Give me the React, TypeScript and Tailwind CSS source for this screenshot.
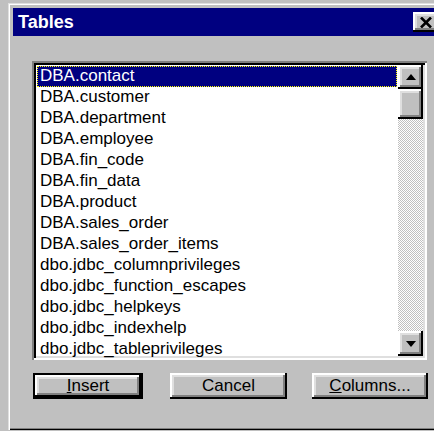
import React from "react";

const tables = [
  "DBA.contact",
  "DBA.customer",
  "DBA.department",
  "DBA.employee",
  "DBA.fin_code",
  "DBA.fin_data",
  "DBA.product",
  "DBA.sales_order",
  "DBA.sales_order_items",
  "dbo.jdbc_columnprivileges",
  "dbo.jdbc_function_escapes",
  "dbo.jdbc_helpkeys",
  "dbo.jdbc_indexhelp",
  "dbo.jdbc_tableprivileges",
];

const raised =
  "shadow-[inset_-2px_-2px_0_#000000,inset_2px_2px_0_#ffffff,inset_-4px_-4px_0_#808080,inset_4px_4px_0_#dfdfdf]";

function Arrow({ up }: { up?: boolean }) {
  return (
    <svg width="10" height="6" viewBox="0 0 10 6">
      <polygon points={up ? "5,0 10,6 0,6" : "0,0 10,0 5,6"} fill="#000" />
    </svg>
  );
}

function ScrollButton({ up, h }: { up?: boolean; h: string }) {
  return (
    <div className={`${raised} bg-[#c0c0c0] w-full flex items-center justify-center ${h}`}>
      <Arrow up={up} />
    </div>
  );
}

function PushButton({
  children,
  width,
  isDefault,
}: {
  children: React.ReactNode;
  width: string;
  isDefault?: boolean;
}) {
  return (
    <div
      className={`${width} h-[26px] ${isDefault ? "border-2 border-black" : ""} bg-[#c0c0c0]`}
    >
      <div
        className={`${raised} w-full h-full flex items-center justify-center text-[17px] text-black leading-[20px]`}
      >
        {children}
      </div>
    </div>
  );
}

export default function App() {
  return (
    <div
      className="w-[434px] h-[431px] overflow-hidden bg-[#c0c0c0] pl-[8px] pt-[3px]"
      style={{ fontFamily: '"Liberation Sans", Arial, sans-serif' }}
    >
      {/* dialog window frame */}
      <div className="w-[440px] h-[427px] bg-[#c0c0c0] p-[5px] shadow-[inset_1px_1px_0_#dfdfdf,inset_2px_2px_0_#ffffff,inset_-1px_-1px_0_#000000,inset_-2px_-2px_0_#808080]">
        {/* title bar */}
        <div className="w-[430px] h-[28px] bg-[#000080] flex items-center justify-between pl-[5px] pr-[4px]">
          <span className="text-white font-bold text-[18px] leading-none">Tables</span>
          <div
            className={`${raised} bg-[#c0c0c0] w-[26px] h-[20px] flex items-center justify-center`}
          >
            <svg width="12" height="11" viewBox="0 0 12 11">
              <path d="M1 0.5 L11 10.5 M11 0.5 L1 10.5" stroke="#000" strokeWidth="2.6" />
            </svg>
          </div>
        </div>

        {/* client area */}
        <div className="pl-[19px] pt-[25px]">
          {/* list box, sunken */}
          <div className="w-[395px] h-[299px] bg-white p-[4px] shadow-[inset_2px_2px_0_#808080,inset_-2px_-2px_0_#ffffff,inset_4px_4px_0_#000000,inset_-4px_-4px_0_#dfdfdf] flex">
            <div className="flex-1 p-[1px] flex flex-col">
              {tables.map((t, i) => (
                <div
                  key={t}
                  className={`h-[21px] shrink-0 flex items-center pl-[2px] pb-[2px] text-[17px] leading-none whitespace-nowrap ${
                    i === 0
                      ? "bg-[#000080] text-white border border-dotted border-[#ffff00]"
                      : "text-black border border-transparent"
                  }`}
                >
                  {t}
                </div>
              ))}
            </div>
            {/* vertical scroll bar */}
            <div className="w-[25px] h-full flex flex-col">
              <ScrollButton up h="h-[24px]" />
              <div className={`${raised} bg-[#c0c0c0] w-full h-[30px]`} />
              <div className="flex-1 bg-[repeating-conic-gradient(#c0c0c0_0_25%,#ffffff_0_50%)] bg-[length:2px_2px]" />
              <ScrollButton h="h-[25px]" />
            </div>
          </div>

          {/* buttons */}
          <div className="flex pt-[13px] pl-[1px]">
            <PushButton width="w-[110px]" isDefault>
              <span>
                <span className="underline underline-offset-1">I</span>nsert
              </span>
            </PushButton>
            <div className="w-[27px]" />
            <PushButton width="w-[117px]">Cancel</PushButton>
            <div className="w-[25px]" />
            <PushButton width="w-[116px]">
              <span>
                <span className="underline underline-offset-1">C</span>olumns...
              </span>
            </PushButton>
          </div>
        </div>
      </div>
    </div>
  );
}
